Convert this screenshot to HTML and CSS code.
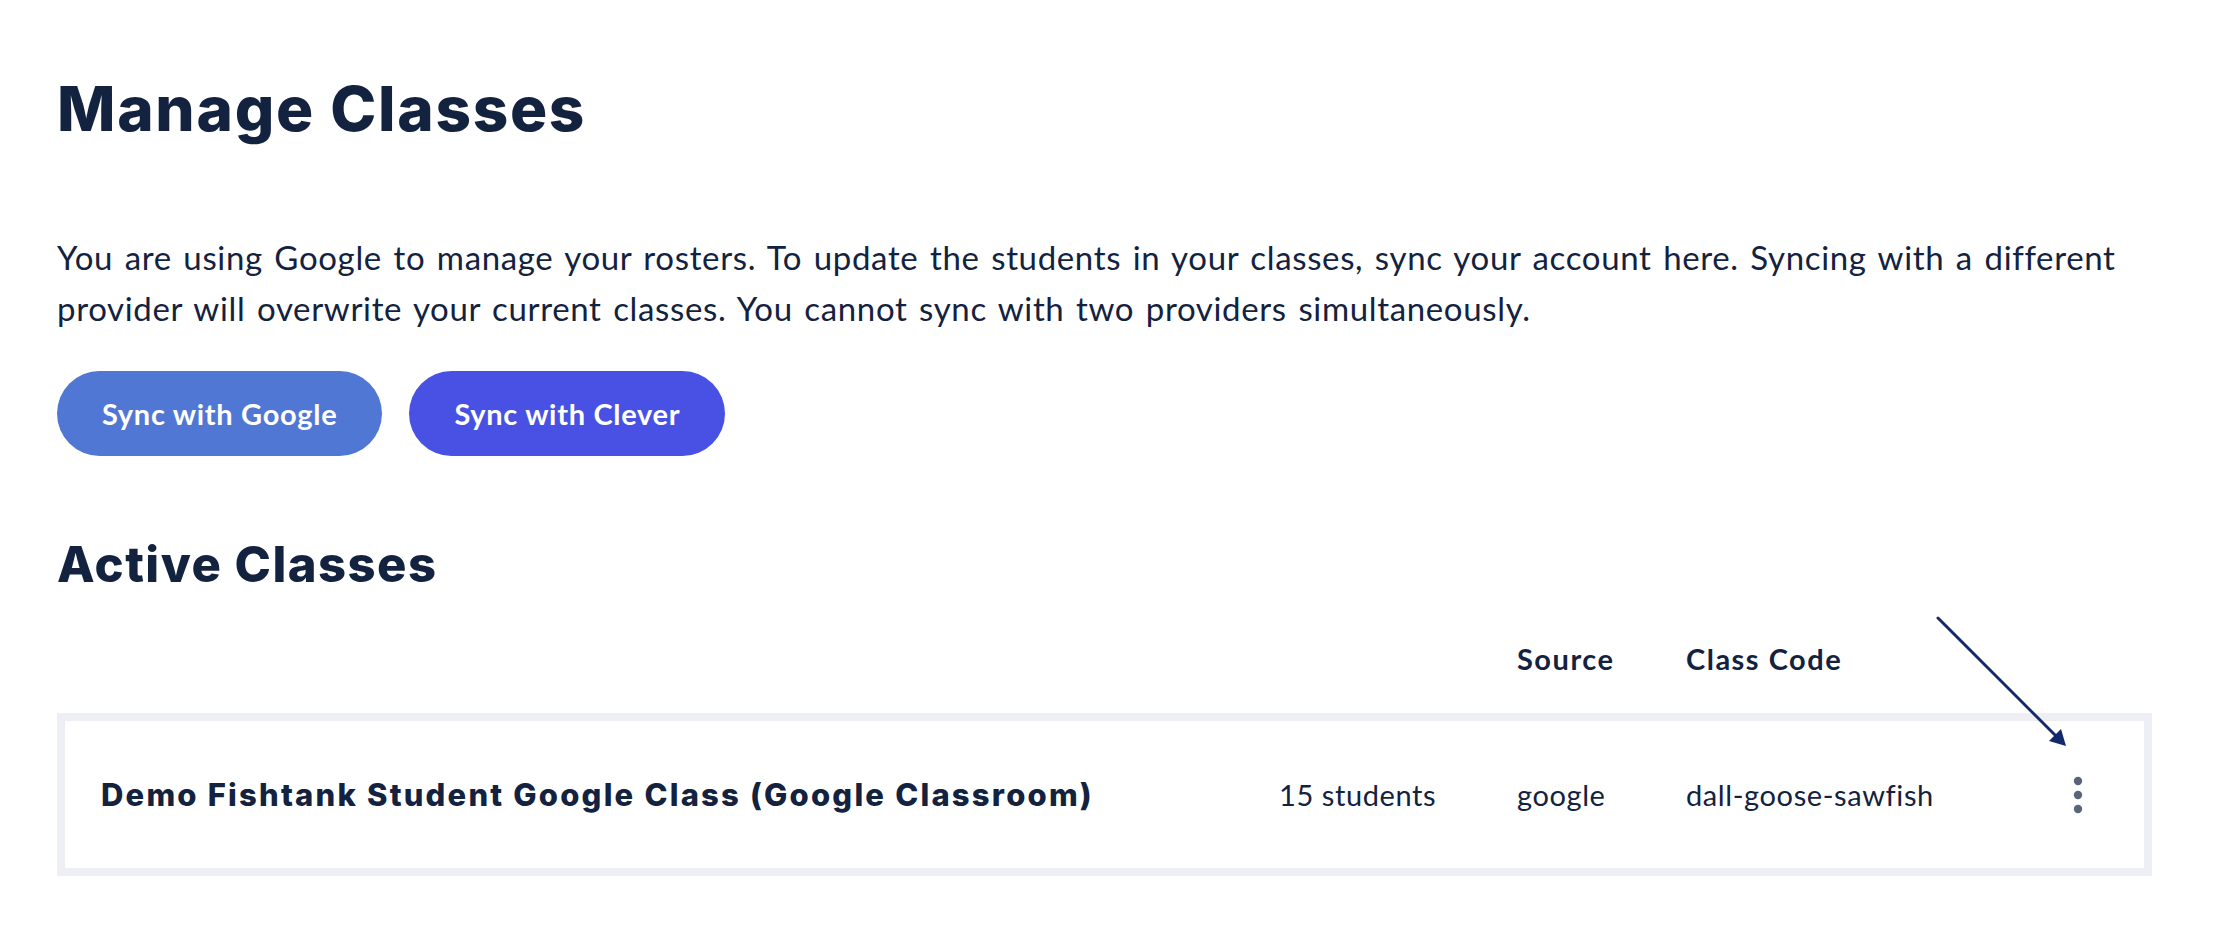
FILE: index.html
```html
<!DOCTYPE html>
<html lang="en">
<head>
<meta charset="utf-8">
<title>Manage Classes</title>
<link rel="stylesheet" href="styles.css">
</head>
<body>
<main class="page">
  <h1 class="title">Manage Classes</h1>
  <p class="intro">You are using Google to manage your rosters. To update the students in your classes, sync your account here. Syncing with a different provider will overwrite your current classes. You cannot sync with two providers simultaneously.</p>
  <div class="actions">
    <button class="btn btn-google">Sync with Google</button>
    <button class="btn btn-clever">Sync with Clever</button>
  </div>
  <section class="classes">
    <h2 class="subtitle">Active Classes</h2>
    <div class="table-head">
      <span></span>
      <span></span>
      <span class="th">Source</span>
      <span class="th">Class Code</span>
      <span></span>
    </div>
    <div class="class-row">
      <span class="class-name">Demo Fishtank Student Google Class (Google Classroom)</span>
      <span class="cell">15 students</span>
      <span class="cell">google</span>
      <span class="cell">dall-goose-sawfish</span>
      <span class="menu">
        <svg width="10" height="38" viewBox="0 0 10 38"><circle cx="5" cy="5" r="4.2"/><circle cx="5" cy="19" r="4.2"/><circle cx="5" cy="33" r="4.2"/></svg>
      </span>
    </div>
  </section>
</main>
<svg class="annotation" width="150" height="150" viewBox="0 0 150 150">
  <line x1="8" y1="8" x2="128" y2="128" stroke="#13296b" stroke-width="3" stroke-linecap="round"/>
  <polygon points="136,136 119,131 131,119" fill="#13296b"/>
</svg>
</body>
</html>
```
FILE: styles.css
```css
html, body {
  margin: 0;
  padding: 0;
  background: #ffffff;
}
body {
  color: #13223f;
  font-family: "Lato", "Noto Sans", sans-serif;
  position: relative;
}
.page {
  width: 2095px;
  padding-left: 57px;
}
.title {
  margin: 78px 0 0;
  font-family: "Inter", "Noto Sans", sans-serif;
  font-weight: 800;
  font-size: 62px;
  line-height: 62px;
  letter-spacing: 1.7px;
}
.intro {
  margin: 92px 0 0;
  font-size: 33px;
  line-height: 51px;
  font-weight: 400;
  letter-spacing: 0.65px;
  word-spacing: 2.5px;
}
.actions {
  display: flex;
  gap: 27px;
  margin-top: 37px;
}
.btn {
  height: 85px;
  padding: 0 45px;
  border: none;
  border-radius: 43px;
  color: #ffffff;
  font-family: "Lato", "Noto Sans", sans-serif;
  font-weight: 700;
  font-size: 29px;
  letter-spacing: 0.7px;
}
.btn-google { background: #5177d4; }
.btn-clever { background: #4851e3; }
.subtitle {
  margin: 84px 0 0;
  font-family: "Inter", "Noto Sans", sans-serif;
  font-weight: 800;
  font-size: 49px;
  line-height: 49px;
  letter-spacing: 1.45px;
}
.table-head,
.class-row {
  display: grid;
  grid-template-columns: 1fr 238px 169px 370px 36px;
  align-items: center;
}
.table-head {
  margin-top: 56px;
  padding: 0 60px 0 44px;
  line-height: 28px;
}
.th {
  font-weight: 700;
  font-size: 29px;
  letter-spacing: 1.5px;
}
.class-row {
  margin-top: 40px;
  height: 147px;
  border: 8px solid #eeeff4;
  padding: 0 52px 0 36px;
}
.class-name {
  font-family: "Inter", "Noto Sans", sans-serif;
  font-weight: 800;
  font-size: 31px;
  letter-spacing: 2.2px;
}
.cell {
  font-size: 29px;
  letter-spacing: 0.6px;
}
.menu {
  display: flex;
  justify-content: center;
  transform: translateX(4px);
}
.menu svg { fill: #5b6579; }
.annotation {
  position: absolute;
  left: 1930px;
  top: 610px;
}
```
